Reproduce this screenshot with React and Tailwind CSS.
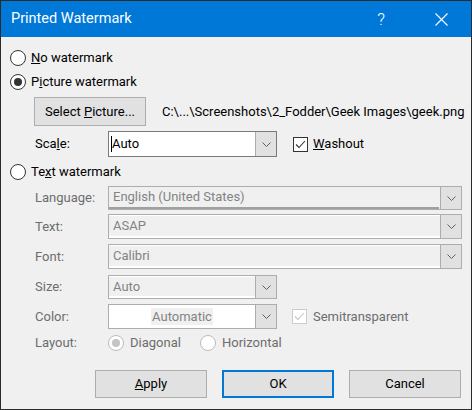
import React from 'react';

const Chevron = ({ color = '#606060' }) => (
  <svg width="9" height="5" viewBox="0 0 9 5" fill="none">
    <polyline points="0.5,0.5 4.5,4.5 8.5,0.5" stroke={color} strokeWidth="1" />
  </svg>
);

const Radio = ({ checked, disabled }) => (
  <div
    className={`w-[16px] h-[16px] shrink-0 rounded-full border bg-white flex items-center justify-center ${
      disabled ? 'border-[#bcbcbc]' : 'border-[#333333]'
    }`}
  >
    {checked && (
      <div className={`w-[8px] h-[8px] rounded-full ${disabled ? 'bg-[#c4c4c4]' : 'bg-[#333333]'}`} />
    )}
  </div>
);

const Check = ({ disabled }) => (
  <div
    className={`w-[15px] h-[15px] shrink-0 border bg-white flex items-center justify-center ${
      disabled ? 'border-[#cccccc]' : 'border-[#333333]'
    }`}
  >
    <svg width="13" height="13" viewBox="0 0 13 13" fill="none">
      <polyline points="2,6.5 5,9.5 11,3" stroke={disabled ? '#c4c4c4' : '#333333'} strokeWidth="1.1" />
    </svg>
  </div>
);

const DropButton = () => (
  <div className="w-[21px] shrink-0 border-l border-[#adadad] bg-[#e1e1e1] flex items-center justify-center">
    <Chevron />
  </div>
);

const Button = ({ children, primary, h = 'h-[28px]' }) => (
  <div
    className={`w-[112px] ${h} shrink-0 bg-[#e1e1e1] flex items-center justify-center text-black ${
      primary ? 'border-2 border-[#0078d7]' : 'border border-[#adadad]'
    }`}
  >
    <span className="whitespace-nowrap">{children}</span>
  </div>
);

export default function App() {
  return (
    <div className="w-[472px] h-[410px] border border-[#2b2b2b] bg-[#f0f0f0] flex flex-col font-['Roboto',sans-serif] text-[13px] text-black overflow-hidden whitespace-nowrap">
      {/* title bar */}
      <div className="h-[36px] shrink-0 bg-[#0078d7] flex items-center pl-[10px] text-white text-[14.5px]">
        <span>Printed Watermark</span>
        <span className="ml-auto mr-[50px] text-[17px] font-light leading-none">?</span>
        <svg width="13" height="13" viewBox="0 0 13 13" className="mr-[23px]">
          <line x1="0.5" y1="0.5" x2="12.5" y2="12.5" stroke="white" strokeWidth="1.1" />
          <line x1="12.5" y1="0.5" x2="0.5" y2="12.5" stroke="white" strokeWidth="1.1" />
        </svg>
      </div>

      {/* no watermark */}
      <div className="mt-[9px] h-[24px] flex items-center pl-[9px]">
        <Radio />
        <span className="ml-[5px]">
          <u>N</u>o watermark
        </span>
      </div>

      {/* picture watermark */}
      <div className="h-[24px] flex items-center pl-[9px]">
        <Radio checked />
        <span className="ml-[5px]">
          P<u>i</u>cture watermark
        </span>
      </div>

      <div className="mt-[3px] h-[29px] flex items-center pl-[33px]">
        <Button h="h-[29px]">
          Select <u>P</u>icture...
        </Button>
        <span className="ml-[16px]">C:\...\Screenshots\2_Fodder\Geek Images\geek.png</span>
      </div>

      <div className="mt-[5px] h-[26px] flex items-center pl-[34px]">
        <span className="w-[73px] shrink-0">
          Sca<u>l</u>e:
        </span>
        <div className="w-[169px] h-[26px] border border-[#7a7a7a] bg-white flex">
          <div className="flex-1 flex items-center pl-[2px]">
            <span className="border-l border-black leading-[16px]">Auto</span>
          </div>
          <DropButton />
        </div>
        <div className="ml-[16px] flex items-center">
          <Check />
          <span className="ml-[5px]">
            <u>W</u>ashout
          </span>
        </div>
      </div>

      {/* text watermark */}
      <div className="mt-[3px] h-[24px] flex items-center pl-[9px]">
        <Radio />
        <span className="ml-[5px]">
          Te<u>x</u>t watermark
        </span>
      </div>

      <div className="mt-[2px] h-[24px] flex items-center pl-[34px] text-[#6d6d6d]">
        <span className="w-[73px] shrink-0">Language:</span>
        <div className="w-[354px] h-[24px] border border-[#adadad] bg-[#f0f0f0] flex">
          <div className="flex-1 flex flex-col pl-[4px] pr-[1px] text-[#838383]">
            <span className="flex-1 flex items-center">English (United States)</span>
            <div className="h-[3px] mb-[2px] -ml-[4px] border-y border-[#a0a0a0]" />
          </div>
          <DropButton />
        </div>
      </div>

      <div className="mt-[4px] h-[25px] flex items-center pl-[34px] text-[#6d6d6d]">
        <span className="w-[73px] shrink-0">Text:</span>
        <div className="w-[354px] h-[25px] border border-[#adadad] bg-[#f0f0f0] flex">
          <div className="flex-1 flex items-center pl-[4px] border-t border-b-2 border-white text-[#838383]">ASAP</div>
          <DropButton />
        </div>
      </div>

      <div className="mt-[5px] h-[25px] flex items-center pl-[34px] text-[#6d6d6d]">
        <span className="w-[73px] shrink-0">Font:</span>
        <div className="w-[354px] h-[25px] border border-[#adadad] bg-[#f0f0f0] flex">
          <div className="flex-1 flex items-center pl-[4px] border-t border-b-2 border-white text-[#838383]">Calibri</div>
          <DropButton />
        </div>
      </div>

      <div className="mt-[6px] h-[24px] flex items-center pl-[34px] text-[#6d6d6d]">
        <span className="w-[73px] shrink-0">Size:</span>
        <div className="w-[169px] h-[24px] border border-[#adadad] bg-[#f0f0f0] flex">
          <div className="flex-1 flex items-center pl-[4px] border-t border-b-2 border-white text-[#838383]">Auto</div>
          <DropButton />
        </div>
      </div>

      <div className="mt-[5px] h-[25px] flex items-center pl-[34px] text-[#6d6d6d]">
        <span className="w-[73px] shrink-0">Color:</span>
        <div className="w-[169px] h-[25px] border border-[#adadad] bg-white flex">
          <div className="flex-1 flex items-center justify-center text-[#838383]">
            <span className="bg-[#f0f0f0] px-[1px] leading-[17px]">Automatic</span>
          </div>
          <DropButton />
        </div>
        <div className="ml-[15px] flex items-center">
          <Check disabled />
          <span className="ml-[6px]">Semitransparent</span>
        </div>
      </div>

      <div className="mt-[3px] h-[22px] flex items-center pl-[34px] text-[#6d6d6d]">
        <span className="w-[73px] shrink-0">Layout:</span>
        <div className="w-[92px] flex items-center">
          <Radio checked disabled />
          <span className="ml-[6px]">Diagonal</span>
        </div>
        <div className="flex items-center">
          <Radio disabled />
          <span className="ml-[6px]">Horizontal</span>
        </div>
      </div>

      {/* buttons */}
      <div className="mt-[16px] flex items-center gap-[15px] pl-[94px]">
        <Button>
          <u>A</u>pply
        </Button>
        <Button primary>OK</Button>
        <Button>Cancel</Button>
      </div>
    </div>
  );
}
